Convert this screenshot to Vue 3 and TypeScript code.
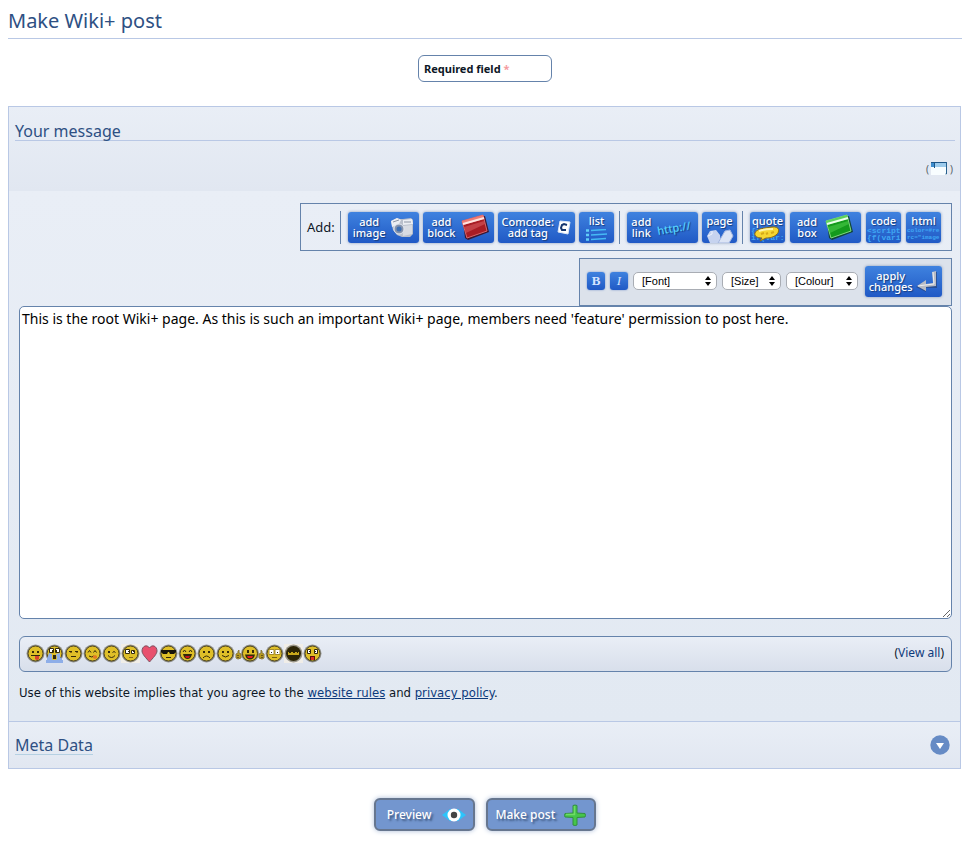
<script setup lang="ts">
import { ref } from 'vue'

interface Shape {
  d: string
  fill?: string
  stroke?: string
  width?: number
}

interface Emoticon {
  name: string
  kind: 'face' | 'heart' | 'wide' | 'framed' | 'ninja'
  shapes: Shape[]
}

const message = ref(
  "This is the root Wiki+ page. As this is such an important Wiki+ page, members need 'feature' permission to post here."
)
const font = ref('')
const size = ref('')
const colour = ref('')
const metaOpen = ref(false)

const ink = '#33290a'
const red = '#c8141c'
const dotEyes: Shape = { d: 'M6 7h2v2H6zM11 7h2v2h-2z', fill: ink }

const emoticons: Emoticon[] = [
  {
    name: 'Cheeky',
    kind: 'face',
    shapes: [
      dotEyes,
      { d: 'M5 11.500h9', stroke: ink },
      { d: 'M9 12h4v3q-2 2-4 0z', fill: '#d8432f' }
    ]
  },
  {
    name: 'Cry',
    kind: 'face',
    shapes: [
      { d: 'M4.500 4.500h4v4h-4zM10.500 4.500h4v4h-4z', fill: '#fff', stroke: ink },
      { d: 'M7 6h1v2H7zM11 6h1v2h-1z', fill: ink },
      { d: 'M4 9l3 1v5l2 2H2v-2zM11 10l4-1v4l2 2v2h-6l1-3z', fill: '#8eaee8' },
      { d: 'M8 11h3v4H8z', fill: ink },
      { d: 'M1 17.500h17', stroke: '#8eaee8', width: 3 }
    ]
  },
  {
    name: 'Dry',
    kind: 'face',
    shapes: [
      { d: 'M5 7.500h3M11 7.500h3M7 12.500h5', stroke: ink },
      { d: 'M6 8.500h2M12 8.500h2', stroke: '#8a6b10' }
    ]
  },
  {
    name: 'Blush',
    kind: 'face',
    shapes: [
      { d: 'M5 8.500l1.500-2 1.500 2M10.500 8.500l1.500-2 1.500 2M6 12q3 2 5 0', stroke: ink },
      { d: 'M10 12l2-1 2 1v2l-2 1-2-1z', fill: '#e27a26' }
    ]
  },
  {
    name: 'Wink',
    kind: 'face',
    shapes: [
      { d: 'M6 7h2v2H6z', fill: ink },
      { d: 'M10.500 8.500q1.500-2 3 0M6 11.500q3.500 4 7 0', stroke: ink }
    ]
  },
  {
    name: 'Blink',
    kind: 'framed',
    shapes: [
      { d: 'M4.500 5.500h4v4h-4zM10.500 6.500h3v3h-3z', fill: '#fff', stroke: ink },
      { d: 'M7 7h1v1H7zM12 7h1v1h-1z', fill: ink },
      { d: 'M8 13.500h4', stroke: '#8a6b10' }
    ]
  },
  { name: 'Heart', kind: 'heart', shapes: [] },
  {
    name: 'Cool',
    kind: 'face',
    shapes: [
      { d: 'M2 6h15v2l-2 2h-4l-1-2H9l-1 2H4L2 8z', fill: '#17140a' },
      { d: 'M7 13.500h5', stroke: ink }
    ]
  },
  {
    name: 'Laugh',
    kind: 'face',
    shapes: [
      { d: 'M5 8l1.500-2L8 8M11 8l1.500-2L14 8', stroke: ink },
      { d: 'M5 10h9q-1 5-4.500 5T5 10z', fill: ink },
      { d: 'M7 12h5l-1 2H8z', fill: red }
    ]
  },
  { name: 'Sad', kind: 'face', shapes: [dotEyes, { d: 'M6 14q3.500-4 7 0', stroke: ink }] },
  { name: 'Smile', kind: 'face', shapes: [dotEyes, { d: 'M6 11.500q3.500 3 7 0', stroke: ink }] },
  {
    name: 'Thumbs',
    kind: 'wide',
    shapes: [
      { d: 'M12 6h2v3h-2zM17 6h2v3h-2z', fill: ink },
      { d: 'M10 10.500h10q-1 5-5 5t-5-5z', fill: ink },
      { d: 'M12 12h6l-1 2h-4z', fill: '#e41b24' },
      { d: 'M3 7l1-1v3l2 1v4l-3 1-2-1v-4l2-1zM27 7l-1-1v3l-2 1v4l3 1 2-1v-4l-2-1z', fill: '#b89a1c', stroke: '#8b7a3c' },
      { d: 'M2 11.500h2M2 13.500h2M26 11.500h2M26 13.500h2', stroke: '#6a5818' }
    ]
  },
  {
    name: 'Shocked',
    kind: 'face',
    shapes: [
      { d: 'M4 5.500h5v5H4zM10 5.500h5v5h-5z', fill: '#fff', stroke: '#a88e2a' },
      { d: 'M6 8h1v1H6zM12 8h1v1h-1z', fill: ink },
      { d: 'M7 13.500h5', stroke: '#7a5f10' }
    ]
  },
  {
    name: 'Ninja',
    kind: 'ninja',
    shapes: [
      { d: 'M4 8h11v3H4z', fill: '#c8a81c' },
      { d: 'M5 8.500h2M9 8.500h2M13 8.500h1', stroke: '#2c2507' }
    ]
  },
  {
    name: 'Gasp',
    kind: 'face',
    shapes: [
      { d: 'M4.500 5.500h3v4h-3zM11.500 5.500h3v4h-3z', fill: '#fff', stroke: ink },
      { d: 'M6 7h1v1H6zM12 7h1v1h-1z', fill: ink },
      { d: 'M7 12h5v4H7z', fill: '#5c120d' },
      { d: 'M8 13h3v3H8z', fill: '#e03022' }
    ]
  }
]
</script>

<template>
  <main class="page">
    <h1 class="title">Make Wiki+ post</h1>

    <div class="required-row">
      <p class="required">Required field <span class="star">*</span></p>
    </div>

    <form class="panel" @submit.prevent>
      <header class="panel-head">
        <h2 class="heading">Your message</h2>
        <div class="popup-row">
          <span>(</span>
          <a href="#popup" class="popup" aria-label="Open in a new window"><svg width="17" height="14" viewBox="0 0 17 14" aria-hidden="true">
            <rect x="0" y="0" width="16" height="13" fill="#f8fdff" />
            <rect x="0" y="0" width="4" height="5" fill="#3f8fd0" />
            <rect x="4" y="0" width="12" height="5" fill="#9dcbec" />
            <path d="M0 .5h16M3.500 0v6" stroke="#1d5688" />
            <path d="M15.500 0v12h-1" fill="none" stroke="#27608e" />
          </svg></a>
          <span>)</span>
        </div>
      </header>

      <section class="editor">
        <div class="toolbars">
          <div class="toolbar insert-bar" role="toolbar" aria-label="Add">
            <span class="add-label">Add:</span>
            <span class="rule"></span>
            <div class="group">
              <button type="button" class="tool wide">
                <span>add<br />image</span>
                <svg width="24" height="24" viewBox="0 0 24 24" aria-hidden="true">
                  <path d="M1 6l6-3 3 1 3 0 8-1 2 2 0 14-3 3-8 0-5-2-4-5z" fill="#b9bfcb" />
                  <path d="M1 6l6-3 4 2-2 4-7 3zM13 5l9-1 1 5-10 1z" fill="#eceef3" />
                  <path d="M12 11l10-1v9l-9 2z" fill="#d8dbe2" />
                  <circle cx="9" cy="14" r="5" fill="#8492ac" stroke="#e3e8f1" />
                  <circle cx="9" cy="14" r="2.500" fill="#3d6fb4" />
                  <path d="M3 7l6-2M14 7h7" stroke="#8e96a5" />
                </svg>
              </button>
              <button type="button" class="tool wide">
                <span>add<br />block</span>
                <svg width="30" height="28" viewBox="0 0 30 28" aria-hidden="true">
                  <path d="M3 9L25 3l4 16-21 8-3-2z" fill="#3c1730" />
                  <path d="M2 8L23 2l4 16-20 7z" fill="#a81c24" stroke="#d9656a" />
                  <path d="M2 8l21-6 1 4L3 12z" fill="#ef7d76" />
                  <path d="M3 11l21-6" stroke="#ffe3e0" stroke-width="2" />
                  <path d="M4 14l20-6 1 3L6 20z" fill="#e0666a" opacity="0.5" />
                </svg>
              </button>
              <button type="button" class="tool comcode">
                <span>Comcode:<br />add tag</span>
                <svg width="14" height="16" viewBox="0 0 14 16" aria-hidden="true">
                  <path d="M3 2l10 1-2 12-10-2z" fill="#fff" stroke="#dce6f6" />
                  <path d="M10 6l-3-1-2 1-1 3 1 2 4 0" fill="none" stroke="#15366f" stroke-width="2" />
                </svg>
              </button>
              <button type="button" class="tool small">
                <span>list</span>
                <svg width="22" height="14" viewBox="0 0 22 14" aria-hidden="true">
                  <path d="M5 1.500l15-1M5 6l16-1M5 10.500l15-1" stroke="#45b9f4" stroke-width="1.500" />
                  <path d="M0 1.500h3M0 6h3M0 10.500h3" stroke="#61cef8" stroke-width="2.500" />
                </svg>
              </button>
            </div>
            <span class="rule"></span>
            <div class="group">
              <button type="button" class="tool wide">
                <span>add<br />link</span>
                <svg width="38" height="26" viewBox="0 0 38 26" aria-hidden="true">
                  <text x="2" y="21" transform="rotate(-10 2 21)" class="http">http://</text>
                </svg>
              </button>
              <button type="button" class="tool small">
                <span>page</span>
                <svg width="28" height="15" viewBox="0 0 28 15" aria-hidden="true">
                  <path d="M4 15L1 8l3-5 6-1 4 5 1 8z" fill="#c6d3ef" />
                  <path d="M12 15l7-12 5-1 3 6-4 7z" fill="#dce4f5" stroke="#a5b7df" />
                  <path d="M2 8l4-2 0-3" fill="none" stroke="#edf3ff" />
                </svg>
              </button>
            </div>
            <span class="rule"></span>
            <div class="group last">
              <button type="button" class="tool small">
                <span>quote</span>
                <svg width="35" height="17" viewBox="0 0 35 17" aria-hidden="true">
                  <text x="1" y="7" class="code">{s    t</text>
                  <text x="1" y="14" class="code">if(var:</text>
                  <path d="M5 7C6 3 14 2 22 1c8-1 8 5 4 8-4 3-8 3-10 3l-6 3 2-3C7 12 4 10 5 7z" fill="#f5d632" stroke="#8b6c12" />
                  <path d="M9 5q5-2 14-2" fill="none" stroke="#fff5ac" stroke-width="2" />
                  <path d="M11 8l3-1M16 8l2-1M21 7l3-1" stroke="#d5a916" stroke-width="2" />
                </svg>
              </button>
              <button type="button" class="tool wide">
                <span>add<br />box</span>
                <svg width="30" height="28" viewBox="0 0 30 28" aria-hidden="true">
                  <path d="M3 9L25 3l4 16-21 8-3-2z" fill="#12463b" />
                  <path d="M2 8L23 2l4 16-20 7z" fill="#149a1d" stroke="#7fdc7c" />
                  <path d="M2 8l21-6 1 4L3 12z" fill="#5dd35c" />
                  <path d="M3 11l21-6" stroke="#eaffea" stroke-width="2" />
                  <path d="M4 14l20-6 1 3L6 20z" fill="#4acb4a" opacity="0.6" />
                </svg>
              </button>
              <button type="button" class="tool small">
                <span>code</span>
                <svg width="35" height="17" viewBox="0 0 35 17" aria-hidden="true">
                  <text x="1" y="7" class="code">&lt;script</text>
                  <text x="1" y="14" class="code">{f(vari</text>
                </svg>
              </button>
              <button type="button" class="tool small">
                <span>html</span>
                <svg width="35" height="17" viewBox="0 0 35 17" aria-hidden="true">
                  <text x="1" y="6" class="code fine">color=#re</text>
                  <text x="1" y="13" class="code fine">rc="image</text>
                </svg>
              </button>
            </div>
          </div>

          <div class="toolbar format-bar" role="toolbar" aria-label="Format">
            <button type="button" class="letter"><b>B</b></button>
            <button type="button" class="letter"><i>I</i></button>
            <label class="picker font-picker">
              <select v-model="font" aria-label="Font">
                <option value="">[Font]</option>
                <option>Arial</option>
                <option>Courier</option>
              </select>
              <svg width="6" height="10" viewBox="0 0 6 10" aria-hidden="true"><path d="M3 0l3 4H0zM3 10l3-4H0z" /></svg>
            </label>
            <label class="picker size-picker">
              <select v-model="size" aria-label="Size">
                <option value="">[Size]</option>
                <option>1</option>
                <option>2</option>
              </select>
              <svg width="6" height="10" viewBox="0 0 6 10" aria-hidden="true"><path d="M3 0l3 4H0zM3 10l3-4H0z" /></svg>
            </label>
            <label class="picker colour-picker">
              <select v-model="colour" aria-label="Colour">
                <option value="">[Colour]</option>
                <option>Black</option>
                <option>Red</option>
              </select>
              <svg width="6" height="10" viewBox="0 0 6 10" aria-hidden="true"><path d="M3 0l3 4H0zM3 10l3-4H0z" /></svg>
            </label>
            <button type="button" class="tool apply">
              <span>apply<br />changes</span>
              <svg width="22" height="24" viewBox="0 0 22 24" aria-hidden="true">
                <path d="M17 3h4v16H10v4L0 18l10-6v4h8z" fill="#263f72" opacity="0.6" />
                <path d="M16 3l4-1v15l-10 1v4L1 17l9-6v4l7-1z" fill="#b9bcc4" />
                <path d="M17 3l1 12-9 1-7 1" fill="none" stroke="#eceef2" />
              </svg>
            </button>
          </div>
        </div>

        <textarea v-model="message" class="message" aria-label="Your message"></textarea>

        <div class="emoticons">
          <div class="faces">
            <button v-for="e in emoticons" :key="e.name" type="button" class="face" :aria-label="e.name">
              <svg
                :width="e.kind === 'wide' ? 30 : 19"
                height="20"
                :viewBox="e.kind === 'wide' ? '0 0 30 20' : '0 0 19 20'"
                aria-hidden="true"
              >
                <rect v-if="e.kind === 'framed' || e.kind === 'ninja'" x="0" y="0" width="19" height="19" fill="#f1eee8" />
                <path
                  v-if="e.kind === 'heart'"
                  d="M9.500 4C7 0 2 2 2 7c0 3 4 7 7.500 11C13 14 17 10 17 7c0-5-5-7-7.500-3z"
                  class="heart"
                />
                <template v-else>
                  <circle :cx="e.kind === 'wide' ? 15 : 9.5" cy="9.500" r="9" class="halo" />
                  <circle
                    :cx="e.kind === 'wide' ? 15 : 9.5"
                    cy="9.500"
                    r="7.500"
                    :class="e.kind === 'ninja' ? 'ninja-skin' : 'skin'"
                  />
                </template>
                <path
                  v-for="(s, i) in e.shapes"
                  :key="i"
                  :d="s.d"
                  :fill="s.fill ?? 'none'"
                  :stroke="s.stroke ?? 'none'"
                  :stroke-width="s.width ?? 1"
                />
              </svg>
            </button>
          </div>
          <span class="view-all">(<a href="#emoticons">View all</a>)</span>
        </div>

        <p class="terms">
          Use of this website implies that you agree to the <a href="#rules">website rules</a> and
          <a href="#privacy">privacy policy</a>.
        </p>
      </section>

      <section class="meta">
        <h2 class="meta-title">Meta Data</h2>
        <button type="button" class="expand" aria-label="Expand" :aria-expanded="metaOpen" @click="metaOpen = !metaOpen">
          <svg width="20" height="20" viewBox="0 0 20 20" aria-hidden="true">
            <circle cx="10" cy="10" r="9.700" fill="#668bc5" />
            <path d="M6 8h8l-4 6z" fill="#fff" />
          </svg>
        </button>
      </section>
    </form>

    <div class="actions">
      <button type="button" class="action">
        Preview
        <svg width="24" height="16" viewBox="0 0 24 16" aria-hidden="true">
          <path d="M0 8L8 2h8l8 6-8 6H8z" fill="#2cc4fb" />
          <circle cx="12" cy="8" r="6.500" fill="#fff" />
          <circle cx="12" cy="8" r="3.200" fill="#444" />
        </svg>
      </button>
      <button type="button" class="action post">
        Make post
        <svg width="22" height="22" viewBox="0 0 22 22" aria-hidden="true">
          <path d="M9 1.500q2-1 4 0V9l8 .5q1 2 0 3.500l-8 .5v7.500q-2 1-4 0V13.500L1 13q-1-1.500 0-3.500L9 9z" fill="#46c54a" stroke="#33903f" />
          <path d="M10.500 2v8.500H2" fill="none" stroke="#6fdc66" stroke-width="1.500" />
        </svg>
      </button>
    </div>
  </main>
</template>

<style>
body {
  margin: 0;
  background: #fff;
}
</style>

<style scoped>
* {
  box-sizing: border-box;
}

.page {
  padding: 8px 4px 8px 8px;
  color: #0d1726;
  font: 12px/16px "Noto Sans", "Open Sans", sans-serif;
}

h1,
h2,
p {
  margin: 0;
  font-weight: 400;
}

button {
  font: inherit;
  cursor: pointer;
}

a {
  color: #0d3a7c;
}

.title {
  height: 31px;
  border-bottom: 1px solid #b9c8e5;
  color: #2e5083;
  font-size: 20px;
  line-height: 26px;
}

.required-row {
  display: flex;
  justify-content: center;
  padding: 16px 0 24px;
}

.required {
  width: 134px;
  padding: 5px;
  border: 1px solid #6583ab;
  border-radius: 6px;
  font-size: 11px;
  font-weight: 700;
  line-height: 15px;
}

.star {
  color: #f49b9f;
}

.panel {
  margin-right: 1px;
  border: 1px solid #b9c8e5;
}

.panel-head {
  height: 84px;
  padding: 14px 5px 0 6px;
  background: linear-gradient(#e9eef6, #e1e7f1);
}

.heading,
.meta-title {
  height: 20px;
  color: #2e5083;
  font-size: 16px;
  line-height: 21px;
}

.heading {
  border-bottom: 1px solid #b9c8e5;
}

.popup-row {
  display: flex;
  align-items: center;
  justify-content: flex-end;
  gap: 2px;
  padding: 20px 2px 0 0;
  color: #555d68;
  font-size: 10px;
}

.popup {
  display: flex;
}

.editor {
  padding: 12px 8px 20px 10px;
  background: linear-gradient(#e9eef6, #e2e9f2);
}

.toolbars {
  display: flex;
  flex-direction: column;
  align-items: flex-end;
  gap: 7px;
}

.toolbar {
  display: flex;
  align-items: center;
  border: 1px solid #6583ab;
}

.insert-bar {
  height: 48px;
  padding: 0 10px 0 6px;
}

.format-bar {
  height: 48px;
  gap: 5px;
  padding: 0 9px 2px 7px;
  background: #dce2eb;
}

.add-label {
  width: 33px;
  font-size: 13px;
}

.rule {
  width: 1px;
  height: 33px;
  background: #6583ab;
}

.group {
  display: flex;
  gap: 4px;
  padding: 0 5px 0 7px;
}

.last {
  gap: 5px;
  padding-right: 0;
}

.tool {
  display: flex;
  align-items: center;
  justify-content: space-evenly;
  height: 31px;
  padding: 0;
  overflow: hidden;
  border: 0;
  border-radius: 3px;
  background: linear-gradient(#3f82df, #2059c5);
  box-shadow: 0 0 3px #8297b9;
  color: #fff;
  font-size: 11px;
  font-weight: 500;
  line-height: 11px;
  text-align: center;
  text-shadow: 1px 1px 1px #173d7d;
}

.tool svg {
  flex: none;
}

.wide {
  width: 71px;
}

.comcode {
  width: 77px;
}

.small {
  flex-direction: column;
  justify-content: space-between;
  width: 35px;
  padding-top: 3px;
}

.apply {
  width: 77px;
}

.http {
  fill: #55d3ff;
  font-size: 11px;
}

.code {
  fill: #3fa6f3;
  font: 700 8px "Liberation Mono", monospace;
  text-shadow: none;
  white-space: pre;
}

.fine {
  font-size: 6px;
}

.letter {
  width: 18px;
  height: 18px;
  padding: 0;
  border: 0;
  border-radius: 3px;
  background: linear-gradient(#3f82df, #2059c5);
  box-shadow: 0 0 2px #6f8fc6;
  color: #d5e4ff;
  font: 13px/18px "Liberation Serif", serif;
}

.picker {
  display: grid;
  align-items: center;
  height: 19px;
}

.picker select,
.picker svg {
  grid-area: 1 / 1;
}

.picker svg {
  justify-self: end;
  margin-right: 6px;
  pointer-events: none;
}

.picker select {
  width: 100%;
  height: 18px;
  padding: 0 16px 0 8px;
  border: 1px solid #a9adb4;
  border-radius: 5px;
  appearance: none;
  background: #fff;
  color: #000;
  font: 11px/16px "Liberation Sans", sans-serif;
}

.font-picker {
  width: 84px;
}

.size-picker {
  width: 59px;
}

.colour-picker {
  width: 72px;
  margin-right: 2px;
}

.message {
  display: block;
  width: 100%;
  height: 313px;
  padding: 2px;
  border: 1px solid #6583ab;
  border-radius: 5px;
  background: #fff;
  color: #000;
  font: 14px/20px "Noto Sans", "Open Sans", sans-serif;
  resize: both;
}

.emoticons {
  display: flex;
  align-items: center;
  justify-content: space-between;
  height: 36px;
  margin-top: 17px;
  padding: 0 7px 0 6px;
  border: 1px solid #6583ab;
  border-radius: 6px;
  background: linear-gradient(#e9eef6, #d8dfeb);
}

.faces {
  display: flex;
}

.face {
  display: flex;
  padding: 0;
  border: 0;
  background: none;
}

.skin {
  fill: #dfbf28;
  stroke: #4c431c;
}

.ninja-skin {
  fill: #2c2507;
}

.halo {
  fill: #403b2b;
  opacity: 0.5;
}

.heart {
  fill: #e8506e;
  stroke: #7b5260;
}

.view-all {
  padding-bottom: 2px;
}

.view-all a {
  text-decoration: none;
}

.terms {
  margin-top: 13px;
  font-family: "DejaVu Sans Condensed", "Noto Sans", sans-serif;
  font-size: 13px;
  line-height: 16px;
}

.meta {
  display: flex;
  align-items: center;
  justify-content: space-between;
  height: 47px;
  padding: 0 10px 0 6px;
  border-top: 1px solid #b9c8e5;
  background: linear-gradient(#e9eef6, #e1e7f1);
}

.meta-title {
  border-bottom: 1px solid #b5d0e2;
}

.expand {
  display: flex;
  padding: 0;
  border: 0;
  background: none;
}

.actions {
  display: flex;
  justify-content: center;
  gap: 11px;
  padding-top: 29px;
}

.action {
  display: flex;
  align-items: center;
  gap: 11px;
  height: 33px;
  padding: 0 7px 0 11px;
  border: 2px solid #66768f;
  border-radius: 6px;
  background: #7396cf;
  box-shadow: 0 0 5px #a9bbd8;
  color: #fff;
  font-size: 12px;
  font-weight: 500;
  text-shadow: 2px 2px 2px #3d577f;
}

.post {
  gap: 9px;
  padding: 0 8px 0 7px;
}
</style>
